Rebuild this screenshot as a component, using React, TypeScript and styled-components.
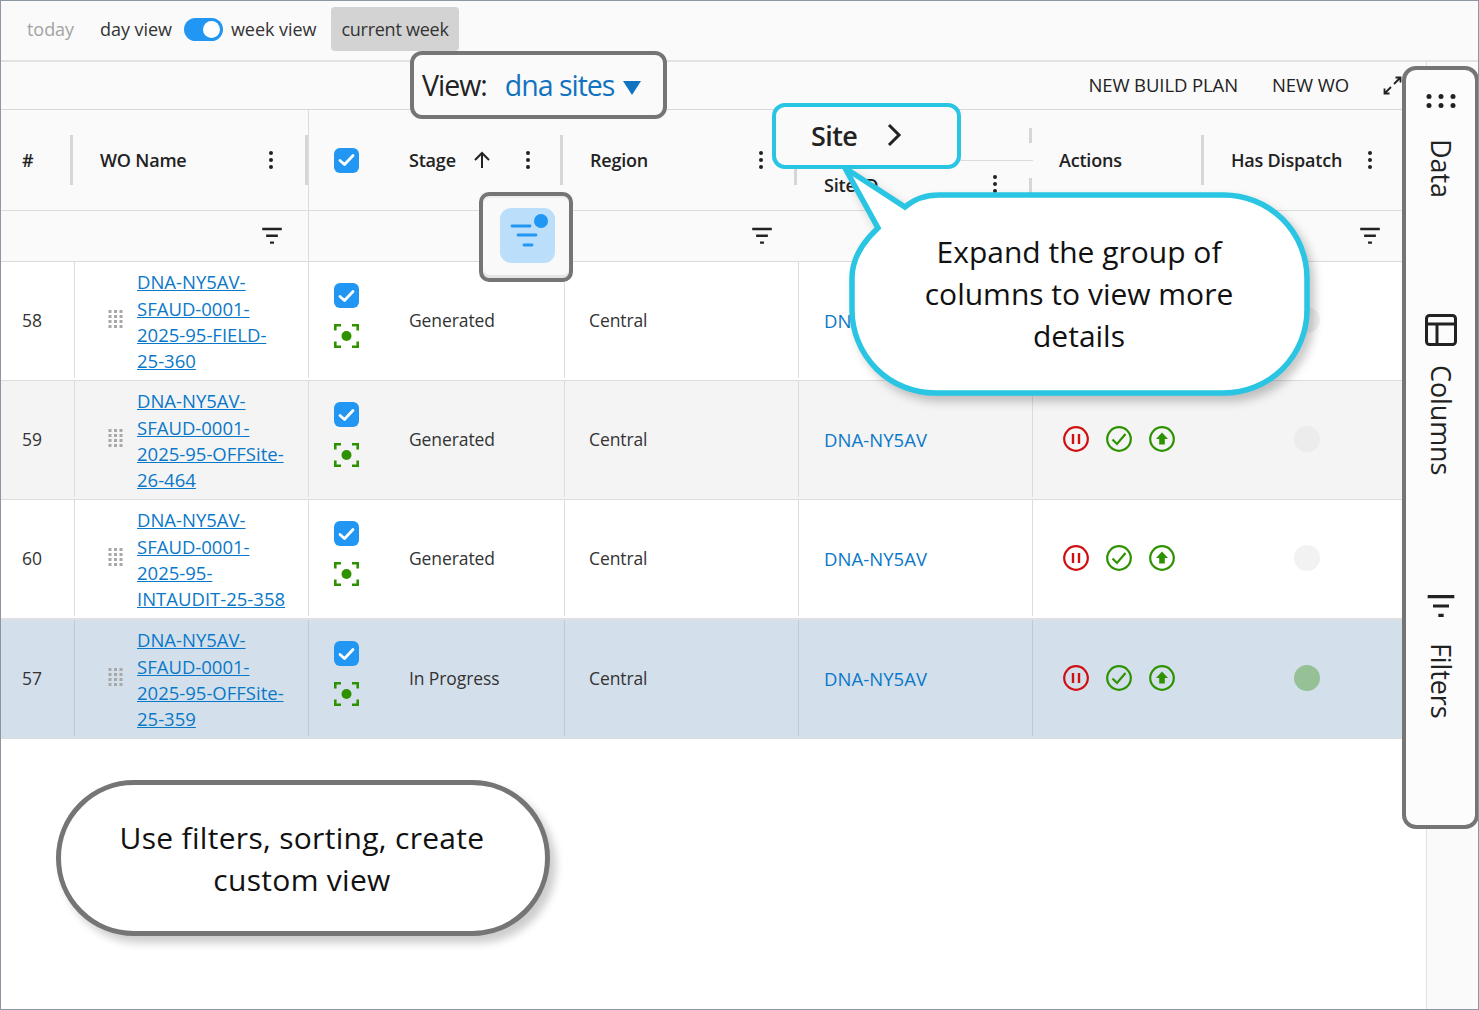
import React from 'react';
import styled, { createGlobalStyle } from 'styled-components';

const GlobalStyle = createGlobalStyle`
  * { box-sizing: border-box; }
  html, body { margin: 0; padding: 0; background: #fff; }
  body { font-family: "Open Sans", "Noto Sans", Arial, sans-serif; color: #1f1f1f; }
`;

const Page = styled.div`
  position: relative;
  width: 1479px;
  height: 1010px;
  overflow: hidden;
  display: flex;
  flex-direction: column;
  background: #fff;
  border: 1px solid #8c96a5;
`;

const Toolbar = styled.div`
  flex: none;
  height: 61px;
  padding: 6px 0 9px 26px;
  display: flex;
  align-items: stretch;
  background: #fafafa;
  border-bottom: 2px solid #e2e2e2;
  font-size: 18px;
  letter-spacing: -0.05px;
`;

const ToolItem = styled.span<{ $muted?: boolean; $gap?: number }>`
  align-self: center;
  color: ${p => (p.$muted ? '#a3a3a3' : '#333')};
  margin-right: ${p => p.$gap ?? 0}px;
`;

const Toggle = styled.span`
  align-self: center;
  width: 39px;
  height: 23px;
  margin: 1px 8px 0 12px;
  padding: 3px 4px 3px 19px;
  border-radius: 12px;
  background: #2196f3;
  &::after {
    content: '';
    display: block;
    width: 17px;
    height: 17px;
    border-radius: 50%;
    background: #fff;
  }
`;

const Chip = styled.span`
  display: flex;
  align-items: center;
  padding: 0 10px;
  width: 128px;
  border-radius: 4px;
  background: #d3d3d3;
  color: #333;
  white-space: nowrap;
  letter-spacing: -0.25px;
`;

const Content = styled.div`
  flex: 1;
  display: flex;
  min-height: 0;
`;

const Main = styled.div`
  flex: none;
  width: 1425px;
`;

const Rail = styled.div`
  flex: 1;
  background: #fafafa;
  border-left: 1px solid #e2e2e2;
`;

const ActionBar = styled.div`
  height: 48px;
  padding: 0 24px 3px 0;
  display: flex;
  align-items: center;
  justify-content: flex-end;
  gap: 34px;
  background: #fafafa;
  border-bottom: 1px solid #d8d8d8;
  font-size: 18.5px;
  letter-spacing: -0.1px;
  color: #222;
  svg { margin: 3px 0 0 0; }
`;

const Table = styled.div`
  width: 1401px;
`;

const Row = styled.div<{ $height: number; $bg?: string; $line?: string; $lift?: number }>`
  display: grid;
  grid-template-columns: 74px 234px 256px 234px 234px 171px 198px;
  height: ${p => p.$height}px;
  padding-bottom: ${p => p.$lift ?? 0}px;
  background: ${p => p.$bg ?? '#fff'};
  border-bottom: ${p => p.$line ?? '1px solid #dcdcdc'};
`;

const HeadCell = styled.div<{ $pad?: number; $border?: boolean }>`
  display: flex;
  align-items: center;
  height: 100%;
  padding-left: ${p => p.$pad ?? 0}px;
  font-size: 18px;
  font-weight: 600;
  letter-spacing: -0.2px;
  color: #222;
  border-right: ${p => (p.$border ? '1px solid #dcdcdc' : 'none')};
`;

const HeadLabel = styled.span<{ $width: number }>`
  width: ${p => p.$width}px;
  white-space: nowrap;
`;

const StageLabel = styled.span`
  margin-left: 50px;
  white-space: nowrap;
`;

const SortArrow = styled.svg`
  margin-left: 17px;
`;

const StageMenu = styled.span`
  display: flex;
  margin-left: 35px;
`;

const Sep = styled.span<{ $right?: number; $height?: number }>`
  flex: none;
  width: 3px;
  height: ${p => p.$height ?? 50}px;
  margin-left: auto;
  margin-right: ${p => p.$right ?? 2}px;
  background: #d6d6d6;
`;

const GroupCell = styled.div`
  display: flex;
  flex-direction: column;
  height: 100%;
`;

const GroupTop = styled.div`
  flex: none;
  height: 51px;
  padding-top: 18px;
  display: flex;
  align-items: flex-start;
  border-bottom: 1px solid #dcdcdc;
`;

const GroupBottom = styled.div`
  flex: 1;
  display: flex;
  align-items: flex-start;
  padding: 12px 0 0 25px;
  font-size: 18px;
  font-weight: 600;
  letter-spacing: -0.2px;
  color: #222;
`;

const GroupMenu = styled.span`
  margin-top: 1px;
`;

const GroupEdge = styled(Sep)`
  margin-top: 5px;
`;

const FilterCell = styled.div<{ $border?: boolean; $icon: number }>`
  display: flex;
  align-items: center;
  padding-left: ${p => p.$icon}px;
  border-right: ${p => (p.$border ? '1px solid #dcdcdc' : 'none')};
`;

const Cell = styled.div<{ $pad?: number; $border?: boolean; $tint?: string }>`
  display: flex;
  align-items: center;
  padding-left: ${p => p.$pad ?? 0}px;
  font-size: 17.5px;
  letter-spacing: -0.1px;
  color: #333;
  border-right: ${p => (p.$border ? `1px solid ${p.$tint ?? '#dcdcdc'}` : 'none')};
`;

const RowLink = styled.a`
  margin: 4px 0 0 14px;
  font-size: 18.5px;
  line-height: 26.3px;
  letter-spacing: 0;
  white-space: pre-line;
  color: #0a78c8;
  text-decoration: underline;
`;

const SiteLink = styled.span`
  font-size: 18.5px;
  letter-spacing: 0.05px;
  color: #0a78c8;
`;

const SelectStack = styled.div`
  display: flex;
  flex-direction: column;
  gap: 16px;
  margin-top: -9px;
`;

const StageText = styled.span`
  margin-left: 50px;
`;

const CheckBox = styled.span`
  display: flex;
  align-items: center;
  justify-content: center;
  width: 25px;
  height: 25px;
  border-radius: 6px;
  background: #2196f3;
`;

const StatusGroup = styled.div`
  display: flex;
  gap: 17px;
`;

const Dot = styled.span<{ $tone: string }>`
  display: block;
  width: 26px;
  height: 26px;
  border-radius: 50%;
  background: ${p => p.$tone};
`;

/* annotations laid over the grid */
const ViewNote = styled.div`
  position: absolute;
  left: 409px;
  top: 50px;
  width: 257px;
  height: 68px;
  display: flex;
  align-items: center;
  padding: 0 0 0 8px;
  background: #fafafa;
  border: 4px solid #757575;
  border-radius: 12px;
  font-size: 28.5px;
  letter-spacing: -1px;
  color: #222;
`;

const ViewName = styled.span`
  margin-left: 18px;
  margin-right: 9px;
  color: #1173c0;
`;

const ViewCaret = styled.svg`
  margin-top: 5px;
`;

const FilterNote = styled.div`
  position: absolute;
  left: 478px;
  top: 191px;
  width: 94px;
  height: 90px;
  display: flex;
  justify-content: center;
  padding-top: 12px;
  background: #f9f9f9;
  border: 4px solid #757575;
  border-radius: 10px;
  box-shadow: inset 0 2px 0 #ececec, inset 0 -3px 0 #e4e4e4;
`;

const FilterBadge = styled.div`
  width: 55px;
  height: 55px;
  margin-left: 2px;
  border-radius: 11px;
  background: #bbdefb;
`;

const SiteNote = styled.div`
  position: absolute;
  left: 771px;
  top: 102px;
  width: 189px;
  height: 66px;
  display: flex;
  align-items: center;
  padding: 0 0 2px 35px;
  gap: 29px;
  background: #fafafa;
  border: 4px solid #29c5e3;
  border-radius: 13px;
  font-size: 27px;
  font-weight: 600;
  letter-spacing: -0.6px;
  color: #222;
`;

const Callout = styled.div`
  position: absolute;
  left: 838px;
  top: 159px;
  width: 480px;
  height: 245px;
  svg {
    position: absolute;
    inset: 0;
    filter: drop-shadow(5px 6px 5px rgba(0, 0, 0, 0.22));
  }
`;

const CalloutText = styled.div`
  position: absolute;
  left: 70px;
  width: 340px;
  top: 71px;
  text-align: center;
  font-size: 30px;
  line-height: 42px;
  letter-spacing: 0;
  color: #111;
`;

const UsageNote = styled.div`
  position: absolute;
  left: 55px;
  top: 779px;
  width: 494px;
  height: 156px;
  padding: 32px 52px 0 50px;
  text-align: center;
  background: #fff;
  border: 5px solid #757575;
  border-radius: 78px;
  box-shadow: 6px 7px 8px rgba(0, 0, 0, 0.2);
  font-size: 30px;
  line-height: 42px;
  letter-spacing: 0.3px;
  color: #111;
`;

const SidePanel = styled.div`
  position: absolute;
  left: 1401px;
  top: 65px;
  width: 77px;
  height: 763px;
  display: flex;
  flex-direction: column;
  align-items: center;
  padding: 24px 0 0 1px;
  background: #fcfcfc;
  border: 4px solid #757575;
  border-radius: 14px;
`;

const SideLabel = styled.span<{ $before: number; $after: number }>`
  writing-mode: vertical-rl;
  margin-top: ${p => p.$before}px;
  margin-bottom: ${p => p.$after}px;
  font-size: 27px;
  line-height: 30px;
  letter-spacing: -0.1px;
  color: #222;
`;

const KebabIcon = () => (
  <svg width="4" height="18" viewBox="0 0 4 18"><circle cx="2" cy="2" r="2" fill="#222" /><circle cx="2" cy="9" r="2" fill="#222" /><circle cx="2" cy="16" r="2" fill="#222" /></svg>
);

const FilterIcon = ({ size = 22, color = '#222' }: { size?: number; color?: string }) => (
  <svg width={size} height={size * 0.8} viewBox="0 0 22 18">
    <path d="M1 2h20M5 9h12M9 16h4" stroke={color} strokeWidth="2.4" fill="none" />
  </svg>
);

const DragIcon = () => (
  <svg width="15" height="20" viewBox="0 0 15 20">
    {[1.5, 6.5, 11.5, 16.5].flatMap(y => [2, 7.5, 13].map(x => <rect key={`${x}-${y}`} x={x - 1.5} y={y - 1.5} width="3" height="3" fill="#a8a8a8" />))}
  </svg>
);

const TickIcon = () => (
  <svg width="17" height="14" viewBox="0 0 17 14"><path d="M2 7.5l4.5 4L15 2.5" stroke="#fff" strokeWidth="2.8" fill="none" strokeLinecap="round" strokeLinejoin="round" /></svg>
);

const FocusIcon = () => (
  <svg width="25" height="24" viewBox="0 0 25 24">
    <path d="M1.3 6.5V1.3H7M18 1.3h5.7V6.5M1.3 17.5v5.2H7M18 22.7h5.7V17.5" stroke="#2e9200" strokeWidth="2.6" fill="none" />
    <circle cx="12.5" cy="12" r="5" fill="#2e9200" />
  </svg>
);

const PauseIcon = () => (
  <svg width="26" height="26" viewBox="0 0 26 26">
    <circle cx="13" cy="13" r="11.8" stroke="#d01010" strokeWidth="2.2" fill="none" />
    <path d="M10 8v10M16 8v10" stroke="#d01010" strokeWidth="2.4" />
  </svg>
);

const DoneIcon = () => (
  <svg width="26" height="26" viewBox="0 0 26 26">
    <circle cx="13" cy="13" r="11.8" stroke="#2e9200" strokeWidth="2.2" fill="none" />
    <path d="M6.5 13.5l4.5 4.5 8.5-10" stroke="#2e9200" strokeWidth="2.2" fill="none" />
  </svg>
);

const PushIcon = () => (
  <svg width="26" height="26" viewBox="0 0 26 26">
    <circle cx="13" cy="13" r="11.8" stroke="#2e9200" strokeWidth="2.2" fill="none" />
    <path d="M13 6.5l6 6.5h-3.2v5.5h-5.6V13H7z" fill="#2e9200" />
  </svg>
);

const rows = [
  { id: '58', name: 'DNA-NY5AV-\nSFAUD-0001-\n2025-95-FIELD-\n25-360', stage: 'Generated', bg: '#fff', dot: '#f2f2f2', height: 119 },
  { id: '59', name: 'DNA-NY5AV-\nSFAUD-0001-\n2025-95-OFFSite-\n26-464', stage: 'Generated', bg: '#f4f4f4', dot: '#ececec', height: 119 },
  { id: '60', name: 'DNA-NY5AV-\nSFAUD-0001-\n2025-95-\nINTAUDIT-25-358', stage: 'Generated', bg: '#fff', dot: '#f2f2f2', height: 120, line: '2px solid #dfdfdf' },
  { id: '57', name: 'DNA-NY5AV-\nSFAUD-0001-\n2025-95-OFFSite-\n25-359', stage: 'In Progress', bg: '#d3e0eb', dot: '#96c096', height: 119 },
];

export default function App() {
  return (
    <Page>
      <GlobalStyle />
      <Toolbar>
        <ToolItem $muted $gap={26}>today</ToolItem>
        <ToolItem>day view</ToolItem>
        <Toggle />
        <ToolItem $gap={15}>week view</ToolItem>
        <Chip>current week</Chip>
      </Toolbar>
      <Content>
        <Main>
          <ActionBar>
            <span>NEW BUILD PLAN</span>
            <span>NEW WO</span>
            <svg width="19" height="19" viewBox="0 0 19 19">
              <path d="M11 8l6.5-6.5M12.5 1.5h5v5M8 11l-6.5 6.5M1.5 12.5v5h5" stroke="#222" strokeWidth="1.8" fill="none" />
            </svg>
          </ActionBar>
          <Table>
            <Row $height={101} $bg="#fafafa">
              <HeadCell $pad={21}><span>#</span><Sep /></HeadCell>
              <HeadCell $pad={25} $border>
                <HeadLabel $width={169}>WO Name</HeadLabel>
                <KebabIcon />
                <Sep $right={0} />
              </HeadCell>
              <HeadCell $pad={25}>
                <CheckBox><TickIcon /></CheckBox>
                <StageLabel>Stage</StageLabel>
                <SortArrow width="18" height="18" viewBox="0 0 18 18"><path d="M9 17V2M2 9l7-7 7 7" stroke="#222" strokeWidth="2" fill="none" /></SortArrow>
                <StageMenu><KebabIcon /></StageMenu>
                <Sep />
              </HeadCell>
              <HeadCell $pad={25}>
                <HeadLabel $width={169}>Region</HeadLabel>
                <KebabIcon />
                <Sep />
              </HeadCell>
              <GroupCell>
                <GroupTop><Sep $height={15} $right={1} /></GroupTop>
                <GroupBottom>
                  <HeadLabel $width={169}>Site ID</HeadLabel>
                  <GroupMenu><KebabIcon /></GroupMenu>
                  <GroupEdge $height={15} $right={1} />
                </GroupBottom>
              </GroupCell>
              <HeadCell $pad={26}><span>Actions</span><Sep $right={0} /></HeadCell>
              <HeadCell $pad={27}>
                <HeadLabel $width={137}>Has Dispatch</HeadLabel>
                <KebabIcon />
              </HeadCell>
            </Row>
            <Row $height={51} $bg="#fafafa">
              <FilterCell $icon={0} />
              <FilterCell $icon={186} $border><FilterIcon /></FilterCell>
              <FilterCell $icon={0} />
              <FilterCell $icon={186}><FilterIcon /></FilterCell>
              <FilterCell $icon={0} />
              <FilterCell $icon={0} />
              <FilterCell $icon={155}><FilterIcon /></FilterCell>
            </Row>
            {rows.map(r => {
              const tint = r.id === '57' ? '#bccbd8' : '#dcdcdc';
              return (
                <Row key={r.id} $height={r.height} $lift={2} $bg={r.bg} $line={r.line}>
                  <Cell $pad={21} $border $tint={tint}>{r.id}</Cell>
                  <Cell $pad={33} $border $tint={tint}>
                    <DragIcon />
                    <RowLink href="#">{r.name}</RowLink>
                  </Cell>
                  <Cell $pad={25} $border $tint={tint}>
                    <SelectStack>
                      <CheckBox><TickIcon /></CheckBox>
                      <FocusIcon />
                    </SelectStack>
                    <StageText>{r.stage}</StageText>
                  </Cell>
                  <Cell $pad={24} $border $tint={tint}>Central</Cell>
                  <Cell $pad={25} $border $tint={tint}><SiteLink>DNA-NY5AV</SiteLink></Cell>
                  <Cell $pad={30}>
                    <StatusGroup>
                      <PauseIcon />
                      <DoneIcon />
                      <PushIcon />
                    </StatusGroup>
                  </Cell>
                  <Cell $pad={90}><Dot $tone={r.dot} /></Cell>
                </Row>
              );
            })}
          </Table>
        </Main>
        <Rail />
      </Content>

      <ViewNote>
        View:
        <ViewName>dna sites</ViewName>
        <ViewCaret width="18" height="14" viewBox="0 0 18 14"><path d="M0 0h18L9 14z" fill="#1173c0" /></ViewCaret>
      </ViewNote>

      <FilterNote>
        <FilterBadge>
          <svg width="55" height="55" viewBox="0 0 55 55">
            <path d="M12 18h18M18 27h18M24 37h8" stroke="#2196f3" strokeWidth="2.8" strokeLinecap="round" fill="none" />
            <circle cx="41" cy="13" r="7" fill="#2196f3" />
          </svg>
        </FilterBadge>
      </FilterNote>

      <SiteNote>
        Site
        <svg width="16" height="24" viewBox="0 0 16 24"><path d="M3 2l10 10L3 22" stroke="#222" strokeWidth="3" fill="none" /></svg>
      </SiteNote>

      <Callout>
        <svg width="480" height="245" viewBox="0 0 480 245">
          <path
            d="M66 47 Q80 35 100 35 H385 A83 83 0 0 1 468 118 V150 A83 83 0 0 1 385 233 H96 A83 83 0 0 1 13 150 V118 Q13 92 39 68 L6 8 Z"
            fill="#fff"
            stroke="#29c5e3"
            strokeWidth="5.5"
          />
        </svg>
        <CalloutText>Expand the group of columns to view more details</CalloutText>
      </Callout>

      <UsageNote>Use filters, sorting, create custom view</UsageNote>

      <SidePanel>
        <svg width="30" height="14" viewBox="0 0 30 14">
          {[2.5, 11.5].flatMap(y => [3, 15, 27].map(x => <circle key={`${x}-${y}`} cx={x} cy={y} r="2.5" fill="#222" />))}
        </svg>
        <SideLabel $before={31} $after={116}>Data</SideLabel>
        <svg width="32" height="32" viewBox="0 0 32 32">
          <rect x="1.5" y="1.5" width="29" height="29" rx="3" stroke="#222" strokeWidth="3" fill="none" />
          <path d="M1.5 10h29M12 10v20" stroke="#222" strokeWidth="3" fill="none" />
        </svg>
        <SideLabel $before={19} $after={119}>Columns</SideLabel>
        <FilterIcon size={30} />
        <SideLabel $before={25} $after={0}>Filters</SideLabel>
      </SidePanel>
    </Page>
  );
}
